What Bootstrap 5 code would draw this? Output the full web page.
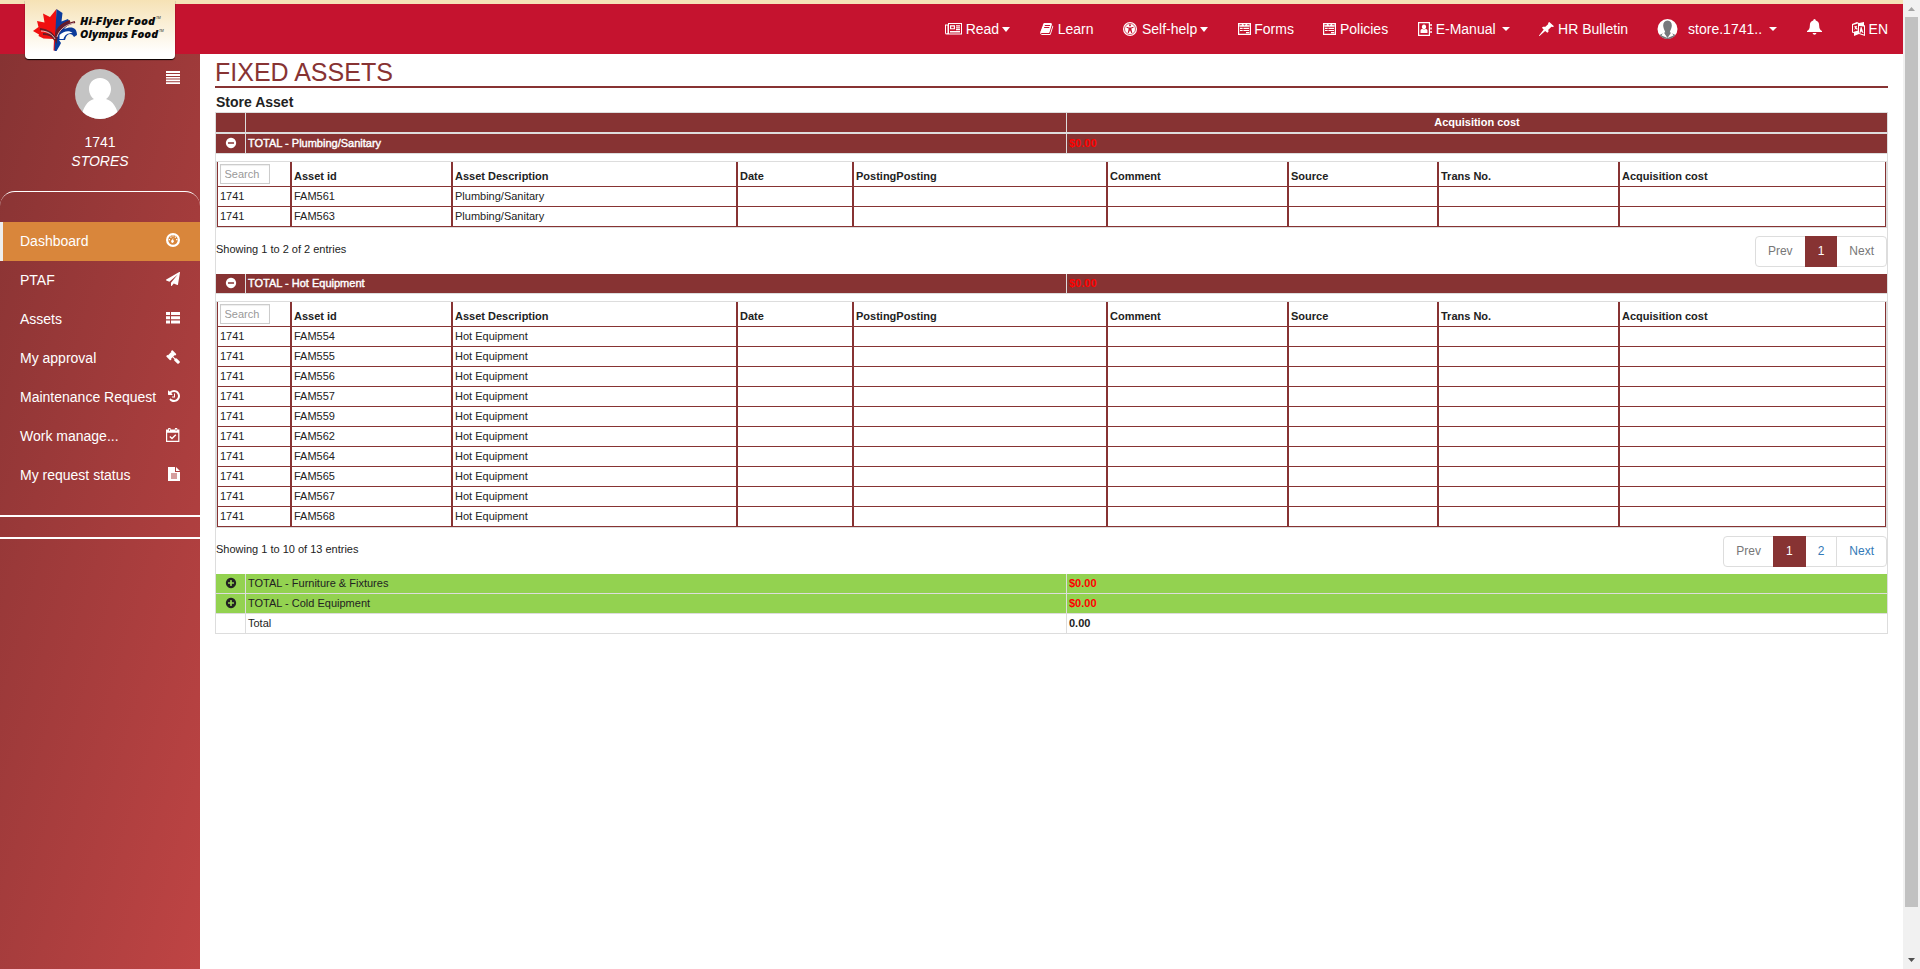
<!DOCTYPE html>
<html lang="en">
<head>
<meta charset="utf-8">
<title>Fixed Assets</title>
<link rel="stylesheet" href="https://cdn.jsdelivr.net/npm/bootstrap@5.3.0/dist/css/bootstrap.min.css">
<script src="https://cdn.jsdelivr.net/npm/bootstrap@5.3.0/dist/js/bootstrap.bundle.min.js"></script>
<style>
:root{--maroon:#873333;--line:#ddd}
html{overflow:hidden}
body{font:14px/20px "Liberation Sans",Arial,sans-serif;color:#222;background:#fff;height:100vh;overflow:hidden}
svg{display:block;fill:currentColor}
a{text-decoration:none}
.main-nav{height:54px;background:#c5132f;border-top:4px solid #f5e3b8;padding:0 15px 0 25px;color:#fff;position:relative}
.main-nav a{color:#fff;white-space:nowrap;display:flex;align-items:center}
.brand-box{width:150px;height:59px;margin-top:-4px;border-radius:0 0 4px 4px;box-shadow:0 1px 1px #000;background:linear-gradient(#f6e2b5,#fff 90%);z-index:2;position:relative}
.top-links{gap:30px;height:50px}
.tri{width:0;height:0;border:4px solid transparent;border-top-color:#fff;border-bottom:0}
.tri-lg{border-width:5px 4.5px 0;margin-left:3px}
.side{width:200px;background:linear-gradient(106deg,#863333,#bf4444);color:#fff}
.side-head{height:137px}
.side-toggle{position:absolute;right:20px;top:17px}
.side-curve{height:31px;border-top:1px solid #fff;border-radius:15px 15px 0 0}
.side-nav a{color:#fff;height:39px;padding:0 20px 1px}
.side-nav a svg{margin-top:-3px}
.side-nav a.current{background:#d9863b;border-left:3px solid #eee;padding-left:17px}
.side-rule{height:2px;background:#fff}
.page-title{font-size:25px;line-height:36px;height:34px;margin:0;color:var(--maroon);border-bottom:2px solid var(--maroon);font-weight:400}
.sub-title{font-size:14px;line-height:20px;padding:4px 0 0 1px;height:24px;margin:0;font-weight:700}
.asset-grid,.asset-rows{table-layout:fixed;border-collapse:separate;border-spacing:0;font-size:11px;line-height:15px}
.asset-grid{width:1673px;border:1px solid var(--line);border-width:1px 0 0 1px}
.asset-grid>*>tr>*{border:solid var(--line);border-width:0 1px 1px 0;padding:2px;height:20px;line-height:15px}
.asset-grid>thead>tr>th{background:var(--maroon);color:#fff;border-bottom-width:2px;height:21px;text-align:center}
.asset-grid>tbody>tr.opened>td{background:var(--maroon);color:#fff;-webkit-text-stroke:.4px}
.asset-grid>tbody>tr.closed>td{background:#93d250}
.asset-grid>tbody>tr>td.cost{font-weight:700;-webkit-text-stroke:0}
.asset-grid>tbody>tr.opened>td.cost,.asset-grid>tbody>tr.closed>td.cost{color:#f00}
.asset-grid>tbody>tr>td.detail{padding:7px 0 0;border-bottom:0;vertical-align:top;height:auto}
.asset-grid td svg{margin:-1px auto 1px}
.asset-rows{width:1671px;border:1px solid var(--line)}
.asset-rows td,.asset-rows th{border:solid var(--maroon);border-width:0 1px 1px;padding:2px;height:20px;line-height:15px}
.asset-rows th{height:25px;padding:6px 2px 2px}
.asset-rows th.find{padding:2px}
.asset-rows input{display:block;width:50px;height:20px;border:1px solid #ccc;padding:0 3.5px;font-size:11px;line-height:18px;font-weight:400;box-shadow:inset 0 1px 1px rgba(0,0,0,.075)}
.asset-rows input::placeholder{color:#999;opacity:1}
.pager-row{height:46px;padding-top:8px}
.pager-row .info{padding-top:6px;line-height:15px}
.pagination{--bs-pagination-font-size:12px;--bs-pagination-padding-x:12px;--bs-pagination-padding-y:6px;--bs-pagination-color:#337ab7;--bs-pagination-border-color:#ddd;--bs-pagination-border-radius:4px;--bs-pagination-active-bg:#873333;--bs-pagination-active-border-color:#873333;--bs-pagination-disabled-color:#777;--bs-pagination-disabled-bg:#fff;--bs-pagination-disabled-border-color:#ddd;line-height:17px}
.scroll-track{width:17px;background:#f1f1f1}
.scroll-thumb{width:13px;height:890px;background:#c1c1c1}
</style>
</head>
<body class="d-flex">
<div class="d-flex flex-column" style="width:1903px">
<nav class="main-nav d-flex justify-content-between flex-shrink-0">
  <div class="brand-box">
    <svg width="150" height="59" viewBox="0 0 150 59">
      <path fill="#f01010" d="M31.500 9L25 17l-7-3.500 1.500 9L12 21l1.500 6L8 31l6 3.500-.5 1.500 5 2.500 10.500.5-.5 11.500h3z"/>
      <path fill="#0b3b9b" d="M31.500 9l6 4-1 8.500L43 19l2 4-6 6c7-3 13-2 13 6l-3 2c-2-4-6-4-8 0l-1 3h-6l2 3-1.500 3-3 5h-2z"/>
      <path fill="#fff" d="M34.500 35c4-4 10-5 13-2-5 0-8 2-9 6h-4z"/>
      <g fill="none"><path stroke="#6b1a24" stroke-width="2.200" d="M15 29c8 1 13 4 16 11 1-9 7-15 19-18M18 34c6 0 10 2 12 6M31 36c0-7 6-12 14-15"/><path stroke="#fff" stroke-width=".7" d="M16 31c7 0 12 4 14 8m2-2c2-7 8-12 17-14"/></g>
      <g font-family="Open Sans,sans-serif" font-weight="800" font-style="italic" font-size="10.5" fill="#0a0a0a">
        <text x="55" y="25" textLength="75" lengthAdjust="spacingAndGlyphs">Hi-Flyer Food</text>
        <text x="55" y="38" textLength="78" lengthAdjust="spacingAndGlyphs">Olympus Food</text>
        <text x="131" y="19" font-size="3.5" font-weight="400">TM</text><text x="134" y="32" font-size="3.5" font-weight="400">TM</text>
      </g>
    </svg>
  </div>
  <div class="top-links d-flex align-items-center">
    <a href="#"><svg width="21" height="14" viewBox="0 0 21 14"><path fill-rule="evenodd" d="M3 1h14v11.500H2Q0 12.500 0 11V2.500h3zM4 2v9.500h12V2zM1 3.500V11q.8.800 1.500 0V3.500zM5 3.300h5v4H5zm1.200 1.200v1.800h2.600V4.500zM11 3.300h4v1.200h-4zm0 1.900h4v1.200h-4zm0 1.900h4v1.200h-4zM5 9h10v1.500H5z"/></svg>Read<i class="tri tri-lg"></i></a>
    <a href="#"><svg width="17.500" height="14" viewBox="40 0 2240 1792" preserveAspectRatio="xMinYMid meet"><path d="M1703 478q40 57 18 129l-275 906q-19 64-76.500 107.500t-122.500 43.500h-923q-77 0-148.500-53.500t-99.500-131.500q-24-67-2-127 0-4 3-27t4-37q1-8-3-21.500t-3-19.500q2-11 8-21t16.500-23.500 16.500-23.500q23-38 45-91.500t30-91.500q3-10 .5-30t-.5-28q3-11 17-28t17-23q21-36 42-92t25-90q1-9-2.500-32t.5-28q4-13 22-30.500t22-22.500q19-26 42.500-84.500t27.500-96.500q1-8-3-25.500t-2-26.500q2-8 9-18t18-23 17-21q8-12 16.500-30.500t15-35 16-36 19.500-32 26.500-23.500 36-11.500 47.500 5.500l-1 3q38-9 51-9h761q74 0 114 56t18 130l-274 906q-36 119-71.500 153.500t-128.500 34.500h-869q-27 0-38 15-11 16-1 43 24 70 144 70h923q29 0 56-15.500t35-41.500l300-987q7-22 5-57 38 15 59 43zm-1064 2q-4 13 2 22.500t20 9.500h608q13 0 25.500-9.500t16.500-22.500l21-64q4-13-2-22.500t-20-9.500h-608q-13 0-25.500 9.500t-16.500 22.500zm-83 256q-4 13 2 22.500t20 9.500h608q13 0 25.500-9.500t16.500-22.500l21-64q4-13-2-22.500t-20-9.500h-608q-13 0-25.500 9.500t-16.500 22.500z"/></svg>Learn</a>
    <a href="#" style="margin-right:-.5px"><svg width="18.500" height="14" viewBox="0 0 18.500 14"><circle cx="7" cy="7" r="7"/><circle cx="7" cy="7" r="5.500" fill="none" stroke="#c5132f" stroke-width=".7"/><path d="M7 2.300a1 1 0 1 1-.01 0zM3.500 4.700l2.500.7h2l2.500-.7v1L8.300 6.400l1 4.600h-1L7 8.300 5.700 11h-1l1-4.600-2.200-.7z" fill="#c5132f"/></svg>Self-help<i class="tri tri-lg"></i></a>
    <a href="#" style="margin-right:-.5px"><svg width="16.500" height="14" viewBox="0 0 16.500 14"><use href="#form-icon"/></svg>Forms</a>
    <a href="#"><svg width="16.500" height="14" viewBox="0 0 16.500 14"><use href="#form-icon"/></svg>Policies</a>
    <a href="#" style="margin-right:-1px"><svg width="17.500" height="14" viewBox="0 0 17.500 14"><path fill-rule="evenodd" d="M0 0h12v14H0zM1.200 1.200v11.600h9.600V1.200zM12.300 2h1.500v2h-1.500zm0 3.500h1.500v2h-1.500zm0 3.500h1.500v2h-1.500z"/><path d="M6 2.500a2.200 2.400 0 1 1-.01 0M2.500 11V8.500q0-1.800 2-1.500 1.500 1 3 0 2-.3 2 1.500V11z"/></svg>E-Manual<i class="tri" style="margin-left:6.500px"></i></a>
    <a href="#" style="margin-right:-1px"><svg width="19" height="14" viewBox="0 0 19 14"><path d="M10.300 0L15 4.300l-1 .8-1.500-.3L9.300 7.700l.2 2.100-1.200 1L6.200 8.900.5 14H0v-.5l4.700-6L2.900 5.700l1.200-1 2.300.1 2.900-2.700L9 .9z"/></svg>HR Bulletin</a>
    <a href="#"><svg width="31" height="20" viewBox="-.5 0 31 20"><circle cx="10" cy="10" r="10" fill="#fff"/><path fill="#76787c" d="M10 1.500c-3 0-4.500 2.500-4.300 5.500.3 3 1.800 4.700 2 6.300L2 16a10 10 0 0 0 16 0l-5.700-2.700c.2-1.600 1.700-3.300 2-6.300.2-3-1.300-5.500-4.300-5.500z"/><path fill="#fff" d="M6 13l4 6-6-2.500zm8 0l-4 6 6-2.500z"/></svg>store.1741..<i class="tri" style="margin-left:7px"></i></a>
    <a href="#"><svg width="15" height="16" viewBox="0 0 15 16" style="margin-top:-5px"><path d="M7.500 0q1.300 0 1.300 1.600 3.400.8 3.400 5.400 0 3.500 2.800 5v1H0v-1q2.800-1.500 2.800-5 0-4.600 3.400-5.400Q6.200 0 7.500 0zM5.500 14h4q-.5 1.800-2 1.800t-2-1.800z"/></svg></a>
    <a href="#"><svg width="16.500" height="14" viewBox="0 0 16.500 14"><path fill-rule="evenodd" d="M0 2l5-2 2 1 5-1v3l1 .5V14L7 12l-5 2V11l-2-.5zM1 3v7l5-1.500V1.500zM7 4v7l5 1.500v-8z"/><path d="M2 4.500l3-.7-.5 2L6 7l-1 .7-1.300-1L2 8l1.200-2zM9.500 5l2 6h-1l-.4-1.200H8.800L8.400 11h-1l1.300-6z"/></svg>EN</a>
  </div>
</nav>
<svg width="0" height="0" class="position-absolute"><defs>
  <path id="form-icon" fill-rule="evenodd" d="M0 1h13v12H0zM1.200 2.200v9.600h10.600V2.200zM1.500 2.500L3 3.500l1.200-1.300h.9L6.500 3.500l1.400-1.300h.9L10 3.500l1.500-1v2.200h-10zM2 5.700h2.700v1.200H2zm3.400 0h5.600v1.200H5.400zM2 7.900h2.700v1.200H2zm3.400 0h5.600v1.200H5.400zm2.600 2h3.300v1.400H8z"/>
</defs></svg>

<div class="d-flex flex-grow-1">
<aside class="side flex-shrink-0">
  <div class="side-head position-relative d-flex flex-column align-items-center">
    <svg class="side-toggle" width="14" height="13" viewBox="0 0 14 13"><path d="M0 0h14v2H0zm0 3h14v2H0zm0 3h14v1.500H0zm0 2.500h14v1.700H0zM0 11.200h14V13H0z"/></svg>
    <svg width="50" height="50" viewBox="0 0 50 50" style="margin-top:15px"><defs><clipPath id="round"><circle cx="25" cy="25" r="25"/></clipPath></defs><g clip-path="url(#round)"><path fill="#c4c4c4" d="M0 0h50v50H0z"/><path fill="#fff" d="M25 9c7 0 11 5 11 11 0 5-3 9-5 10 7 2 11 9 12 16v6H7v-6c1-7 5-14 12-16-2-1-5-5-5-10 0-6 4-11 11-11z"/></g></svg>
    <div style="margin-top:13px;line-height:20px">1741</div>
    <div class="fst-italic" style="line-height:18px">STORES</div>
  </div>
  <div class="side-curve"></div>
  <nav class="side-nav">
    <a href="#" class="current d-flex align-items-center justify-content-between">Dashboard<svg width="14" height="14" viewBox="0 0 14 14"><circle cx="7" cy="7" r="5.900" fill="none" stroke="#fff" stroke-width="2.200"/><path d="M7.300 4.500l-.2 2.600a1.400 1.400 0 1 1-1-.1zM4.300 3.500h1.200v1.300H4.300zM8.800 3.500H10v1.300H8.800zM2.800 6H4v1.300H2.800zm7.300 0h1.300v1.300h-1.300zM6.400 2.500h1.200v1H6.400z"/></svg></a>
    <a href="#" class="d-flex align-items-center justify-content-between">PTAF<svg width="14" height="14" viewBox="0 0 1792 1792"><path d="M1764 11q33 24 27 64l-256 1536q-5 29-32 45-14 8-31 8-11 0-24-5l-453-185-242 295q-18 23-49 23-13 0-22-4-19-7-30.500-23.500t-11.500-36.500v-349l864-1059-1069 925-395-162q-37-14-40-55-2-40 32-59l1664-960q15-9 32-9 20 0 36 11z"/></svg></a>
    <a href="#" class="d-flex align-items-center justify-content-between">Assets<svg width="14" height="14" viewBox="0 0 14 14"><path d="M0 1h4v3H0zm5 0h9v3H5zM0 5.200h4v3H0zm5 0h9v3H5zM0 9.500h4v3H0zm5 0h9v3H5z"/></svg></a>
    <a href="#" class="d-flex align-items-center justify-content-between">My approval<svg width="14" height="14" viewBox="0 0 1792 1792"><path d="M1771 1536q0 53-37 90l-107 108q-39 37-91 37-53 0-90-37l-363-364q-38-36-38-90 0-53 43-96l-256-256-126 126q-14 14-34 14t-34-14q2 2 12.500 12t12.500 13 10 11.500 10 13.500 6 13.500 5.500 16.500 1.500 18q0 38-28 68-3 3-16.500 18t-19 20.500-18.500 16.500-22 15.500-22 9-26 4.500q-40 0-68-28l-408-408q-28-28-28-68 0-13 4.500-26t9-22 15.500-22 16.500-18.500 20.500-19 18-16.500q30-28 68-28 10 0 18 1.500t16.500 5.500 13.500 6 13.500 10 11.500 10 13 12.500 12 12.500q-14-14-14-34t14-34l348-348q14-14 34-14t34 14q-2-2-12.500-12t-12.500-13-10-11.500-10-13.500-6-13.500-5.500-16.500-1.500-18q0-38 28-68 3-3 16.500-18t19-20.500 18.500-16.500 22-15.500 22-9 26-4.500q40 0 68 28l408 408q28 28 28 68 0 13-4.500 26t-9 22-15.500 22-16.500 18.500-20.500 19-18 16.500q-30 28-68 28-10 0-18-1.500t-16.500-5.500-13.500-6-13.500-10-11.500-10-13-12.500-12-12.500q14 14 14 34t-14 34l-126 126 256 256q43-43 96-43 52 0 91 37l363 363q37 39 37 91z"/></svg></a>
    <a href="#" class="d-flex align-items-center justify-content-between text-nowrap">Maintenance Request<svg width="12" height="14" viewBox="0 0 1536 1792"><path d="M1536 896q0 156-61 298t-164 245-245 164-298 61q-172 0-327-72.500t-264-204.500q-7-10-6.500-22.500t8.500-20.500l137-138q10-9 25-9 16 2 23 12 73 95 179 147t225 52q104 0 198.500-40.500t163.500-109.500 109.500-163.500 40.500-198.500-40.500-198.500-109.500-163.500-163.500-109.500-198.500-40.500q-98 0-188 35.500t-160 101.500l137 138q31 30 14 69-17 40-59 40h-448q-26 0-45-19t-19-45v-448q0-42 40-59 39-17 69 14l130 129q107-101 244.500-156.500t284.500-55.500q156 0 298 61t245 164 164 245 61 298zm-640-288v448q0 14-9 23t-23 9h-320q-14 0-23-9t-9-23v-64q0-14 9-23t23-9h224v-352q0-14 9-23t23-9h64q14 0 23 9t9 23z"/></svg></a>
    <a href="#" class="d-flex align-items-center justify-content-between">Work manage...<svg width="14" height="14" viewBox="0 0 14 14"><path fill-rule="evenodd" d="M0 1.500h2.200V0h2.300v1.500h4.400V0h2.300v1.500h2.200V14H0zM1.200 4.800v8h11v-8zM3 1v2h.7V1zm6.700 0v2h.7V1z"/><path fill="none" stroke="#fff" stroke-width="1.400" d="M3.800 8.500L6 10.500 9.800 6.700"/></svg></a>
    <a href="#" class="d-flex align-items-center justify-content-between">My request status<svg width="12" height="14" viewBox="0 0 12 14"><path fill-rule="evenodd" d="M0 0h7v5h5v9H0zM3 6.500v1h6v-1zm0 2v1h6v-1zm0 2v1h6v-1zM8 0l4 4H8z"/></svg></a>
  </nav>
  <div class="side-rule" style="margin-top:20px"></div>
  <div class="side-rule" style="margin-top:20px"></div>
</aside>

<main style="padding-left:15px">
  <h1 class="page-title">FIXED ASSETS</h1>
  <h2 class="sub-title">Store Asset</h2>
  <table class="asset-grid">
    <colgroup><col style="width:30px"><col style="width:821px"><col style="width:821px"></colgroup>
    <thead><tr><th></th><th></th><th>Acquisition cost</th></tr></thead>
    <tbody id="groups"></tbody>
  </table>
</main>
</div>
</div>
<div class="scroll-track d-flex flex-column align-items-center flex-shrink-0">
  <svg width="17" height="17" viewBox="0 0 17 17" class="flex-shrink-0"><path fill="#a3a3a3" d="M5 11h7L8.500 7z"/></svg>
  <div class="scroll-thumb"></div>
  <svg width="17" height="17" viewBox="0 0 17 17" class="mt-auto"><path fill="#505050" d="M5 6h7l-3.500 4z"/></svg>
</div>
<script>
const minus='<svg width="12" height="12" viewBox="0 0 1792 1792"><path fill-rule="evenodd" d="M1344 960v-128q0-26-19-45t-45-19h-768q-26 0-45 19t-19 45v128q0 26 19 45t45 19h768q26 0 45-19t19-45zm320-64q0 209-103 385.500t-279.500 279.500-385.500 103-385.500-103-279.500-279.500-103-385.500 103-385.500 279.500-279.500 385.500-103 385.500 103 279.500 279.500 103 385.500z"/></svg>';
const plus='<svg width="12" height="12" viewBox="0 0 1792 1792"><path d="M1344 960v-128q0-26-19-45t-45-19h-256v-256q0-26-19-45t-45-19h-128q-26 0-45 19t-19 45v256h-256q-26 0-45 19t-19 45v128q0 26 19 45t45 19h256v256q0 26 19 45t45 19h128q26 0 45-19t19-45v-256h256q26 0 45-19t19-45zm320-64q0 209-103 385.500t-279.500 279.500-385.500 103-385.500-103-279.500-279.500-103-385.500 103-385.500 279.500-279.500 385.500-103 385.500 103 279.500 279.500 103 385.500z"/></svg>';
const widths=[74,161,285,116,254,181,150,181,267];
const heads=['Asset id','Asset Description','Date','PostingPosting','Comment','Source','Trans No.','Acquisition cost'];
const groups=[
  {name:'Plumbing/Sanitary',ids:[561,563],total:2,pages:1},
  {name:'Hot Equipment',ids:[554,555,556,557,559,562,564,565,567,568],total:13,pages:2},
  {name:'Furniture &amp; Fixtures'},
  {name:'Cold Equipment'}
];
const item=(label,state='')=>`<li class="page-item ${state}"><a class="page-link" href="#">${label}</a></li>`;
let out='';
for(const g of groups){
  out+=`<tr class="${g.ids?'opened':'closed'}"><td>${g.ids?minus:plus}</td><td>TOTAL - ${g.name}</td><td class="cost">$0.00</td></tr>`;
  if(!g.ids) continue;
  const rows=g.ids.map(n=>`<tr><td>1741</td><td>FAM${n}</td><td>${g.name}</td>${'<td></td>'.repeat(6)}</tr>`).join('');
  out+=`<tr><td colspan="3" class="detail"><table class="asset-rows"><colgroup>${widths.map(w=>`<col style="width:${w}px">`).join('')}</colgroup>
    <thead><tr><th class="find"><input placeholder="Search"></th>${heads.map(h=>`<th>${h}</th>`).join('')}</tr></thead><tbody>${rows}</tbody></table>
    <div class="pager-row d-flex justify-content-between"><div class="info">Showing 1 to ${g.ids.length} of ${g.total} entries</div>
    <ul class="pagination m-0">${item('Prev','disabled')}${item('1','active')}${g.pages>1?item('2'):''}${item('Next',g.pages>1?'':'disabled')}</ul></div></td></tr>`;
}
out+='<tr><td></td><td>Total</td><td class="cost">0.00</td></tr>';
document.getElementById('groups').innerHTML=out;
</script>
</body>
</html>
